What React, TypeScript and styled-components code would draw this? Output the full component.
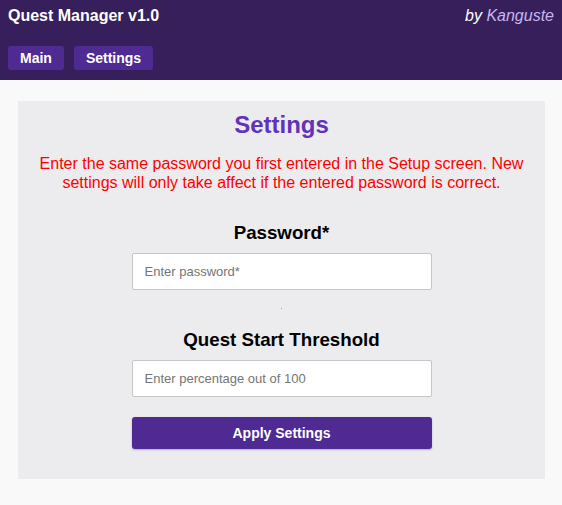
import React from "react";
import styled, { createGlobalStyle } from "styled-components";

const Global = createGlobalStyle`
  html, body { margin: 0; padding: 0; background: #f9f9f9; }
  body { font-family: "Liberation Sans", Arial, sans-serif; }
  * { box-sizing: border-box; }
`;

const Header = styled.header`
  background: #371f5b;
  padding: 7px 8px 10px 8px;
  display: flex;
  flex-direction: column;
`;

const TitleRow = styled.div`
  display: flex;
  justify-content: space-between;
  align-items: center;
  height: 18px;
  line-height: 18px;
`;

const AppTitle = styled.h1`
  margin: 0;
  font-size: 16px;
  font-weight: bold;
  color: #ffffff;
`;

const Byline = styled.span`
  font-size: 16px;
  font-style: italic;
  color: #ffffff;
`;

const Author = styled.span`
  color: #c9b5f2;
`;

const Nav = styled.nav`
  display: flex;
  gap: 10px;
  margin-top: 21px;
`;

const NavButton = styled.button`
  height: 24px;
  padding: 0 12px;
  border: none;
  border-radius: 3px;
  background: #4f2a93;
  color: #ffffff;
  font-family: "Liberation Sans", Arial, sans-serif;
  font-size: 14px;
  font-weight: bold;
  cursor: pointer;
`;

const Main = styled.main`
  padding: 21px 17px 26px 18px;
`;

const Card = styled.section`
  background: #ececee;
  padding: 10px 0 30px 0;
  display: flex;
  flex-direction: column;
  align-items: center;
`;

const CardTitle = styled.h2`
  margin: 0;
  font-size: 24px;
  line-height: 28px;
  font-weight: bold;
  color: #6233b9;
`;

const Notice = styled.p`
  margin: 15px 0 0 0;
  font-size: 16px;
  line-height: 19px;
  color: #ff0000;
  text-align: center;
  padding: 0 20px;
`;

const FieldLabel = styled.label<{ $top: number }>`
  margin-top: ${(p) => p.$top}px;
  font-size: 18.72px;
  line-height: 21px;
  font-weight: bold;
  color: #000000;
`;

const TextInput = styled.input`
  margin-top: 10px;
  width: 300px;
  height: 37px;
  padding: 0 12px;
  border: 1px solid #c6c6c6;
  border-radius: 2px;
  background: #ffffff;
  font-family: "Liberation Sans", Arial, sans-serif;
  font-size: 13px;
  color: #333;
  &::placeholder { color: #757575; }
`;

const Dot = styled.div`
  width: 1px;
  height: 1px;
  background: #9a9a9a;
  margin: 18px 0 20px 0;
`;

const SubmitButton = styled.button`
  margin-top: 20px;
  width: 300px;
  height: 32px;
  border: none;
  border-radius: 3px;
  background: #4f2a93;
  color: #ffffff;
  font-family: "Liberation Sans", Arial, sans-serif;
  font-size: 14px;
  font-weight: bold;
  box-shadow: 0 1px 2px rgba(0, 0, 0, 0.25);
  cursor: pointer;
`;

export default function App() {
  return (
    <>
      <Global />
      <Header>
        <TitleRow>
          <AppTitle>Quest Manager v1.0</AppTitle>
          <Byline>
            by <Author>Kanguste</Author>
          </Byline>
        </TitleRow>
        <Nav>
          <NavButton>Main</NavButton>
          <NavButton>Settings</NavButton>
        </Nav>
      </Header>
      <Main>
        <Card>
          <CardTitle>Settings</CardTitle>
          <Notice>
            Enter the same password you first entered in the Setup screen. New
            settings will only take affect if the entered password is correct.
          </Notice>
          <FieldLabel $top={30}>Password*</FieldLabel>
          <TextInput type="password" placeholder="Enter password*" />
          <Dot />
          <FieldLabel $top={0}>Quest Start Threshold</FieldLabel>
          <TextInput type="text" placeholder="Enter percentage out of 100" />
          <SubmitButton>Apply Settings</SubmitButton>
        </Card>
      </Main>
    </>
  );
}
